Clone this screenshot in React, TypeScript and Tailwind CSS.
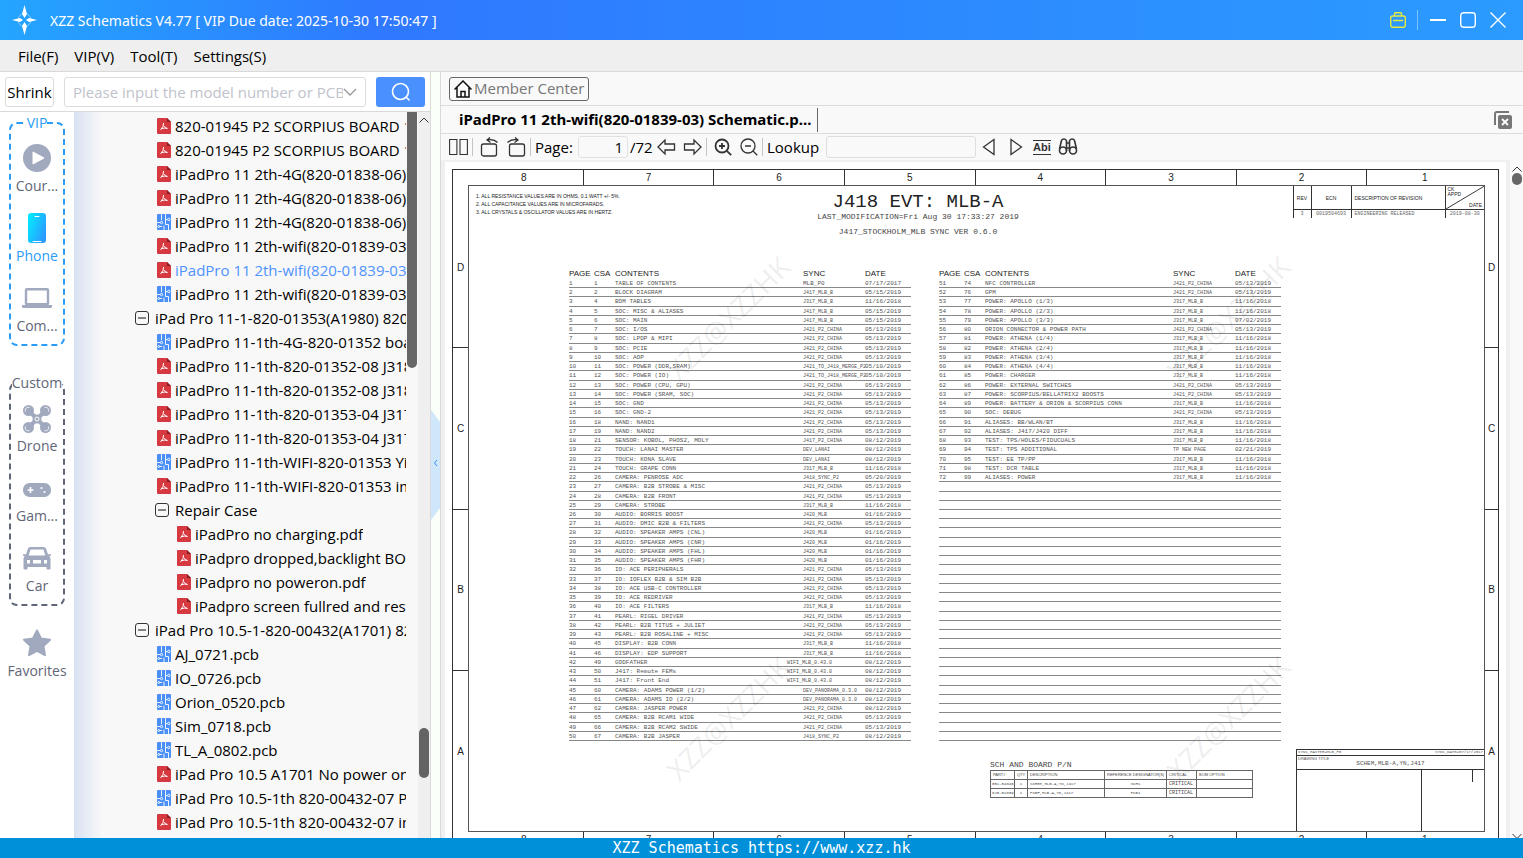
import type { ReactNode } from "react";

type NodeKind = "pdf" | "pcb" | "folder" | "subfolder" | "subpdf";

const tree: [NodeKind, string][] = [
  ["pdf", "820-01945 P2 SCORPIUS BOARD 1000.pdf"],
  ["pdf", "820-01945 P2 SCORPIUS BOARD 1000 Schematic.pdf"],
  ["pdf", "iPadPro 11 2th-4G(820-01838-06) Boardview.pdf"],
  ["pdf", "iPadPro 11 2th-4G(820-01838-06) Schematic.pdf"],
  ["pcb", "iPadPro 11 2th-4G(820-01838-06).pcb"],
  ["pdf", "iPadPro 11 2th-wifi(820-01839-03) Boardview.pdf"],
  ["pdf", "iPadPro 11 2th-wifi(820-01839-03) Schematic.pdf"],
  ["pcb", "iPadPro 11 2th-wifi(820-01839-03) .pcb"],
  ["folder", "iPad Pro 11-1-820-01353(A1980) 820-01352"],
  ["pcb", "iPadPro 11-1th-4G-820-01352 board.pcb"],
  ["pdf", "iPadPro 11-1th-820-01352-08 J318.pdf"],
  ["pdf", "iPadPro 11-1th-820-01352-08 J318 Schematic.pdf"],
  ["pdf", "iPadPro 11-1th-820-01353-04 J317.pdf"],
  ["pdf", "iPadPro 11-1th-820-01353-04 J317 Schematic.pdf"],
  ["pcb", "iPadPro 11-1th-WIFI-820-01353 YiLi.pcb"],
  ["pdf", "iPadPro 11-1th-WIFI-820-01353 image.pdf"],
  ["subfolder", "Repair Case"],
  ["subpdf", "iPadPro no charging.pdf"],
  ["subpdf", "iPadpro dropped,backlight BOOST.pdf"],
  ["subpdf", "iPadpro no poweron.pdf"],
  ["subpdf", "iPadpro screen fullred and restart.pdf"],
  ["folder", "iPad Pro 10.5-1-820-00432(A1701) 820-00433"],
  ["pcb", "AJ_0721.pcb"],
  ["pcb", "IO_0726.pcb"],
  ["pcb", "Orion_0520.pcb"],
  ["pcb", "Sim_0718.pcb"],
  ["pcb", "TL_A_0802.pcb"],
  ["pdf", "iPad Pro 10.5 A1701 No power on.pdf"],
  ["pcb", "iPad Pro 10.5-1th 820-00432-07 PCB.pcb"],
  ["pdf", "iPad Pro 10.5-1th 820-00432-07 image.pdf"],
];

const SELECTED = 6;

const indent: Record<NodeKind, string> = {
  folder: "pl-[61px] gap-[6px]",
  subfolder: "pl-[81px] gap-[6px]",
  pdf: "pl-[83px] gap-[4px]",
  pcb: "pl-[83px] gap-[4px]",
  subpdf: "pl-[103px] gap-[4px]",
};

// page | csa | contents | sync | date
const contentsA = `1|1|TABLE OF CONTENTS|MLB_P0|07/17/2017
2|2|BLOCK DIAGRAM|J417_MLB_B|05/15/2019
3|4|BOM TABLES|J317_MLB_B|11/16/2018
4|5|SOC: MISC & ALIASES|J417_MLB_B|05/15/2019
5|6|SOC: MAIN|J417_MLB_B|05/15/2019
6|7|SOC: I/OS|J421_P2_CHINA|05/13/2019
7|8|SOC: LPDP & MIPI|J421_P2_CHINA|05/13/2019
8|9|SOC: PCIE|J421_P2_CHINA|05/13/2019
9|10|SOC: AOP|J421_P2_CHINA|05/13/2019
10|11|SOC: POWER (DDR,SRAM)|J421_TO_J418_MERGE_P2|05/10/2019
11|12|SOC: POWER (IO)|J421_TO_J418_MERGE_P2|05/10/2019
12|13|SOC: POWER (CPU, GPU)|J421_P2_CHINA|05/13/2019
13|14|SOC: POWER (SRAM, SOC)|J421_P2_CHINA|05/13/2019
14|15|SOC: GND|J421_P2_CHINA|05/13/2019
15|16|SOC: GND-2|J421_P2_CHINA|05/13/2019
16|18|NAND: NAND1|J421_P2_CHINA|05/13/2019
17|19|NAND: NAND2|J421_P2_CHINA|05/13/2019
18|21|SENSOR: KOBOL, PHOS2, MOLY|J417_P2_CHINA|08/12/2019
19|22|TOUCH: LANAI MASTER|DEV_LANAI|08/12/2019
20|23|TOUCH: KONA SLAVE|DEV_LANAI|08/12/2019
21|24|TOUCH: GRAPE CONN|J317_MLB_B|11/16/2018
22|26|CAMERA: PENROSE ADC|J418_SYNC_P2|05/20/2019
23|27|CAMERA: B2B STROBE & MISC|J421_P2_CHINA|05/13/2019
24|28|CAMERA: B2B FRONT|J421_P2_CHINA|05/13/2019
25|29|CAMERA: STROBE|J317_MLB_B|11/16/2018
26|30|AUDIO: BORRIS BOOST|J420_MLB|01/16/2019
27|31|AUDIO: DMIC B2B & FILTERS|J421_P2_CHINA|05/13/2019
28|32|AUDIO: SPEAKER AMPS (CNL)|J420_MLB|01/16/2019
29|33|AUDIO: SPEAKER AMPS (CNR)|J420_MLB|01/16/2019
30|34|AUDIO: SPEAKER AMPS (FHL)|J420_MLB|01/16/2019
31|35|AUDIO: SPEAKER AMPS (FHR)|J420_MLB|01/16/2019
32|36|IO: ACE PERIPHERALS|J421_P2_CHINA|05/13/2019
33|37|IO: IOFLEX B2B & SIM B2B|J421_P2_CHINA|05/13/2019
34|38|IO: ACE USB-C CONTROLLER|J421_P2_CHINA|05/13/2019
35|39|IO: ACE REDRIVER|J421_P2_CHINA|05/13/2019
36|40|IO: ACE FILTERS|J317_MLB_B|11/16/2018
37|41|PEARL: RIGEL DRIVER|J421_P2_CHINA|05/13/2019
38|42|PEARL: B2B TITUS + JULIET|J421_P2_CHINA|05/13/2019
39|43|PEARL: B2B ROSALINE + MISC|J421_P2_CHINA|05/13/2019
40|45|DISPLAY: B2B CONN|J317_MLB_B|11/16/2018
41|46|DISPLAY: EDP SUPPORT|J317_MLB_B|11/16/2018
42|49|GODFATHER|WIFI_MLB_0.43.0|08/12/2019
43|50|J417: Remote FEMs|WIFI_MLB_0.43.0|08/12/2019
44|51|J417: Front End|WIFI_MLB_0.43.0|08/12/2019
45|60|CAMERA: ADAMS POWER (1/2)|DEV_PANORAMA_0.3.0|08/12/2019
46|61|CAMERA: ADAMS IO (2/2)|DEV_PANORAMA_0.3.0|08/12/2019
47|62|CAMERA: JASPER POWER|J421_P2_CHINA|08/12/2019
48|65|CAMERA: B2B RCAM1 WIDE|J421_P2_CHINA|05/13/2019
49|66|CAMERA: B2B RCAM2 SWIDE|J421_P2_CHINA|05/13/2019
50|67|CAMERA: B2B JASPER|J418_SYNC_P2|08/12/2019`;

const contentsB = `51|74|NFC CONTROLLER|J421_P2_CHINA|05/13/2019
52|76|GPM|J421_P2_CHINA|05/13/2019
53|77|POWER: APOLLO (1/3)|J317_MLB_B|11/16/2018
54|78|POWER: APOLLO (2/3)|J317_MLB_B|11/16/2018
55|79|POWER: APOLLO (3/3)|J317_MLB_B|07/02/2019
56|80|ORION CONNECTOR & POWER PATH|J421_P2_CHINA|05/13/2019
57|81|POWER: ATHENA (1/4)|J317_MLB_B|11/16/2018
58|82|POWER: ATHENA (2/4)|J317_MLB_B|11/16/2018
59|83|POWER: ATHENA (3/4)|J317_MLB_B|11/16/2018
60|84|POWER: ATHENA (4/4)|J317_MLB_B|11/16/2018
61|85|POWER: CHARGER|J317_MLB_B|11/16/2018
62|86|POWER: EXTERNAL SWITCHES|J421_P2_CHINA|05/13/2019
63|87|POWER: SCORPIUS/BELLATRIX2 BOOSTS|J421_P2_CHINA|05/13/2019
64|89|POWER: BATTERY & ORION & SCORPIUS CONN|J317_MLB_B|11/16/2018
65|90|SOC: DEBUG|J421_P2_CHINA|05/13/2019
66|91|ALIASES: BB/WLAN/BT|J317_MLB_B|11/16/2018
67|92|ALIASES: J417/J420 DIFF|J317_MLB_B|11/16/2018
68|93|TEST: TPS/HOLES/FIDUCUALS|J317_MLB_B|11/16/2018
69|94|TEST: TPS ADDITIONAL|TP NEW PAGE|02/21/2019
70|95|TEST: EE TP/PP|J317_MLB_B|11/16/2018
71|98|TEST: DCR TABLE|J317_MLB_B|11/16/2018
72|99|ALIASES: POWER|J317_MLB_B|11/16/2018`;

const ROWS = 50;

function toRows(source: string) {
  const rows = source.split("\n").map((line) => line.split("|"));
  while (rows.length < ROWS) rows.push(["", "", "", "", ""]);
  return rows;
}

function PdfIcon() {
  return (
    <svg className="shrink-0" width="14" height="16" viewBox="0 0 14 16">
      <path d="M1 0h9l4 4v11a1 1 0 0 1-1 1H1a1 1 0 0 1-1-1V1a1 1 0 0 1 1-1z" fill="#d63a40" />
      <path d="M10 0l4 4h-4z" fill="#8d1d22" />
      <path d="M6.500 5q.6 3-3 7M6.900 8q1 2 3.500 2.500M5 10.600q2.500-1 5.400-.2" fill="none" stroke="#fff" strokeWidth="1" />
    </svg>
  );
}

function PcbIcon() {
  return (
    <svg className="shrink-0" width="14" height="16" viewBox="0 0 14 16">
      <rect width="14" height="16" rx="1" fill="#4a8ff8" />
      <g fill="none" stroke="#fff" strokeWidth="0.900">
        <path d="M4.500 0v6M8.500 0v10.500h3V16M0 8.500h3M7 16v-4.500M5 12.500H2.500M8.500 5.500h2" />
        <circle cx="11.800" cy="5.500" r="1.200" />
        <circle cx="4.500" cy="8.500" r="1.200" />
        <circle cx="1.700" cy="12.500" r="1" />
      </g>
    </svg>
  );
}

function MinusBox() {
  return (
    <svg className="shrink-0" width="14" height="14" viewBox="0 0 14 14" fill="none" stroke="#333">
      <rect x="0.500" y="0.500" width="13" height="13" rx="2.500" />
      <path d="M3 7h8" strokeWidth="1.200" />
    </svg>
  );
}

function TreeRow({ kind, label, selected }: { kind: NodeKind; label: string; selected: boolean }) {
  const isFolder = kind === "folder" || kind === "subfolder";
  return (
    <li className={`flex h-6 items-center ${indent[kind]} ${selected ? "text-[#4f93ff]" : "text-black"}`}>
      {isFolder ? <MinusBox /> : kind === "pcb" ? <PcbIcon /> : <PdfIcon />}
      <span className="overflow-hidden whitespace-nowrap">{label}</span>
    </li>
  );
}

function SideItem({ label, active, children }: { label: string; active?: boolean; children: ReactNode }) {
  return (
    <button className={`flex w-full flex-col items-center ${active ? "text-[#2b9cf5]" : "text-[#5f6678]"}`}>
      <span className="flex h-9 items-center justify-center text-[#a0a9be]">{children}</span>
      <span className="h-5 text-[14px] leading-5">{label}</span>
    </button>
  );
}

function Sidebar() {
  return (
    <nav className="flex w-[74px] shrink-0 flex-col items-center bg-white pt-[2px]">
      <fieldset className="w-14 rounded-lg border-2 border-dashed border-[#2b9cf5] pb-2">
        <legend className="mx-auto text-[14px] leading-[18px] text-[#2b9cf5]">VIP</legend>
        <div className="flex flex-col gap-[14px] pt-2">
          <SideItem label="Cour...">
            <svg width="28" height="28" viewBox="0 0 28 28">
              <circle cx="14" cy="14" r="14" fill="currentColor" />
              <path d="M10 8l11 6-11 6z" fill="#fff" stroke="#fff" strokeLinejoin="round" />
            </svg>
          </SideItem>
          <SideItem label="Phone" active>
            <svg width="18" height="30" viewBox="0 0 18 30">
              <defs>
                <linearGradient id="phone" x1="0" y1="0" x2="1" y2="0.600">
                  <stop offset="0" stopColor="#00f0ff" />
                  <stop offset="1" stopColor="#2b9cff" />
                </linearGradient>
              </defs>
              <rect width="18" height="30" rx="3" fill="url(#phone)" />
              <path d="M7 3.500h4M5 28.500h8" stroke="#fff" strokeLinecap="round" />
            </svg>
          </SideItem>
          <SideItem label="Com...">
            <svg width="30" height="20" viewBox="0 0 30 20">
              <rect x="4" y="1.200" width="22" height="15" rx="1" fill="none" stroke="currentColor" strokeWidth="2.400" />
              <path d="M0 17h30v1.500a1.500 1.500 0 0 1-1.500 1.500h-27A1.500 1.500 0 0 1 0 18.500z" fill="currentColor" />
            </svg>
          </SideItem>
        </div>
      </fieldset>

      <fieldset className="mt-7 w-14 rounded-lg border-2 border-dashed border-[#5f6678] pb-2">
        <legend className="mx-auto text-[14px] leading-[18px] text-[#5f6678]">Custom</legend>
        <div className="flex flex-col gap-[14px] pt-2">
          <SideItem label="Drone">
            <svg width="28" height="30" viewBox="0 -2 28 30" fill="currentColor">
              <path d="M6 6l16 16M22 6L6 22" stroke="currentColor" strokeWidth="4" />
              <circle cx="5.500" cy="5.500" r="5.500" />
              <circle cx="22.500" cy="5.500" r="5.500" />
              <circle cx="5.500" cy="22.500" r="5.500" />
              <circle cx="22.500" cy="22.500" r="5.500" />
              <circle cx="14" cy="14" r="4.500" />
              <circle cx="14" cy="14" r="2" fill="none" stroke="#fff" />
              <path d="M2.500 6.500a3 3 0 0 1 4-4M21.500 2.500a3 3 0 0 1 4 4M2.500 21.500a3 3 0 0 0 4 4M21.500 25.500a3 3 0 0 0 4-4" fill="none" stroke="#fff" strokeWidth="0.800" />
            </svg>
          </SideItem>
          <SideItem label="Gam...">
            <svg width="28" height="18" viewBox="0 -4 28 18">
              <rect width="28" height="14" rx="6.500" fill="currentColor" />
              <path d="M4.500 7h6M7.500 4v6" stroke="#fff" strokeWidth="1.600" />
              <circle cx="18.500" cy="5" r="1.100" fill="#fff" />
              <circle cx="21.500" cy="9" r="1.100" fill="#fff" />
            </svg>
          </SideItem>
          <SideItem label="Car">
            <svg width="28" height="23" viewBox="0 0 28 23" fill="currentColor">
              <path fillRule="evenodd" d="M7.500 0h13q2 0 2.700 2l1.800 5.500 2.500-.5q.5 0 .5.700v.8l-1.600.7q1.100 1 1.100 2.800v9.500q0 1-1 1h-2q-1 0-1-1v-1.500h-19V21.500q0 1-1 1h-2q-1 0-1-1V12q0-1.800 1.100-2.800L0 8.500v-.8q0-.7.500-.7L3 7.500 4.800 2Q5.500 0 7.500 0zM7.500 2.500L5.700 8.500h16.600l-1.800-6zM4 13v3.500h3V13zM10 13v3.500h8V13zM21 13v3.500h3V13z" />
            </svg>
          </SideItem>
        </div>
      </fieldset>

      <div className="mt-[19px] w-full">
        <SideItem label="Favorites">
          <svg width="30" height="28" viewBox="0 0 30 28">
            <path d="M15 1.500l4 8 9 1.300-6.500 6.300 1.500 9-8-4.200-8 4.200 1.500-9L2 10.800l9-1.300z" fill="currentColor" stroke="currentColor" strokeWidth="2" strokeLinejoin="round" />
          </svg>
        </SideItem>
      </div>
    </nav>
  );
}

function TitleBar() {
  return (
    <header className="flex h-10 shrink-0 items-center bg-linear-to-r from-[#24a5ff] via-[#2f78ff] via-25% to-[#2b9bff] pr-[17px] pl-3 text-white">
      <svg width="25" height="30" viewBox="0 0 25 30">
        <circle cx="12.500" cy="15" r="6.500" fill="none" stroke="#9fd3ff" strokeWidth="0.800" />
        <path d="M12.500 0l2.500 9-2.500 4-2.500-4zM12.500 30l2.500-9-2.500-4-2.500 4zM0 15l8-2 3 2-3 2zM25 15l-8-2-3 2 3 2z" fill="#fff" />
      </svg>
      <h1 className="ml-[13px] pt-px font-['Noto_Sans',sans-serif] text-[14px] leading-5">XZZ Schematics V4.77 [ VIP Due date: 2025-10-30 17:50:47 ]</h1>
      <div className="ml-auto flex items-center">
        <button aria-label="Membership">
          <svg width="16" height="16" viewBox="0 0 16 16" fill="none" stroke="#e6ea3c" strokeWidth="1.400">
            <rect x="0.700" y="4" width="14.600" height="11.300" rx="2" />
            <path d="M4.500 4V1.500q0-.8.800-.8h5.400q.8 0 .8.800V4M3 8.500h10" />
          </svg>
        </button>
        <span className="ml-[11px] h-5 w-px bg-[#7cc0ff]" />
        <button aria-label="Minimize" className="ml-3">
          <svg width="16" height="16" viewBox="0 0 16 16"><path d="M0 8h16" stroke="#fff" strokeWidth="2" /></svg>
        </button>
        <button aria-label="Maximize" className="ml-[14px]">
          <svg width="16" height="16" viewBox="0 0 16 16"><rect x="0.700" y="0.700" width="14.600" height="14.600" rx="3" fill="none" stroke="#fff" strokeWidth="1.400" /></svg>
        </button>
        <button aria-label="Close" className="ml-[14px]">
          <svg width="16" height="16" viewBox="0 0 16 16"><path d="M0.500 0.500l15 15M15.500 0.500l-15 15" stroke="#fff" strokeWidth="1.400" /></svg>
        </button>
      </div>
    </header>
  );
}

function SearchBar() {
  return (
    <div className="flex h-10 shrink-0 items-center border-b border-[#d9d9d9] bg-white px-[5px] pt-px">
      <button className="h-[30px] w-[49px] rounded-[3px] border border-[#dcdcdc] text-[15px] text-black">Shrink</button>
      <label className="ml-[10px] flex h-[30px] min-w-0 flex-1 items-center rounded-[3px] border border-[#dcdcdc] px-2">
        <input
          aria-label="Model number or PCB"
          placeholder="Please input the model number or PCB"
          className="min-w-0 flex-1 text-[15px] outline-none placeholder:text-[#bfc3cb]"
        />
        <svg className="shrink-0" width="14" height="8" viewBox="0 0 14 8"><path d="M1 1l6 6 6-6" fill="none" stroke="#999" strokeWidth="1.400" /></svg>
      </label>
      <button aria-label="Search" className="ml-[10px] flex h-[30px] w-[49px] items-center justify-center rounded-[3px] bg-[#4a90ff]">
        <svg width="20" height="20" viewBox="0 0 20 20" fill="none" stroke="#fff" strokeWidth="1.600">
          <circle cx="9.500" cy="9.500" r="8" />
          <path d="M15 15l3 3" strokeLinecap="round" />
        </svg>
      </button>
    </div>
  );
}

function LeftPanel() {
  return (
    <aside className="flex w-[431px] shrink-0 flex-col border-r border-[#d9d9d9]">
      <SearchBar />
      <div className="flex min-h-0 flex-1">
        <Sidebar />
        <div className="flex min-w-0 flex-1 bg-[#f8f8f8] bg-linear-to-r from-[#d9e2f2] to-[#f8f8f8] to-[28px]">
          <ul className="min-w-0 flex-1 overflow-hidden pt-[2px] text-[15px] leading-6">
            {tree.map(([kind, label], i) => (
              <TreeRow key={i} kind={kind} label={label} selected={i === SELECTED} />
            ))}
          </ul>
          <div className="ml-px w-[11px] shrink-0">
            <div className="h-64 w-[10px] rounded-b-full bg-[#666]" />
          </div>
          <div className="flex w-3 shrink-0 flex-col items-center bg-[#efefef] pt-[5px]">
            <svg width="10" height="6" viewBox="0 0 10 6"><path d="M0.500 5.500L5 1l4.500 4.500" fill="none" stroke="#333" /></svg>
            <div className="mt-auto mb-[60px] h-[50px] w-[10px] rounded-full bg-[#636363]" />
          </div>
        </div>
      </div>
    </aside>
  );
}

function Splitter() {
  return (
    <div className="flex w-[9px] shrink-0 flex-col bg-[#fafff9]">
      <button aria-label="Collapse panel" className="mt-[338px]">
        <svg width="9" height="110" viewBox="0 0 9 110">
          <path d="M0 0l9 12v86L0 110z" fill="#cfe6fb" />
          <path d="M6 50L3.500 53 6 56" fill="none" stroke="#3c8ff0" />
        </svg>
      </button>
    </div>
  );
}

function ToolIcon({ label, className, width, children }: { label: string; className?: string; width: number; children: ReactNode }) {
  return (
    <button aria-label={label} className={className}>
      <svg width={width} height="20" viewBox={`0 0 ${width} 20`} fill="none" stroke="#333" strokeWidth="1.300">
        {children}
      </svg>
    </button>
  );
}

function Divider() {
  return <span className="mx-1 h-[18px] w-px bg-[#c4c4c4]" />;
}

function ToolBar() {
  return (
    <div className="flex h-[26px] shrink-0 items-center bg-[#f9f9f9] pl-2 text-[15px] text-black">
      <ToolIcon label="Two pages" width={19}>
        <path d="M0.600 2.500h7.300v15H0.600zM11 2.500h7.400v15H11z" strokeWidth="1.100" />
      </ToolIcon>
      <Divider />
      <ToolIcon label="Rotate left" width={20} className="ml-[3px]">
        <rect x="1.500" y="7" width="15" height="12" rx="2" />
        <path d="M17.500 5.500Q13.500 1.500 7 3M10 0.500L7 3l3.500 2.500" />
      </ToolIcon>
      <ToolIcon label="Rotate right" width={20} className="ml-[6px]">
        <rect x="3.500" y="7" width="15" height="12" rx="2" />
        <path d="M1.500 5.500Q5.500 1.500 12 3M9 0.500L12 3 8.500 5.500" />
      </ToolIcon>
      <Divider />
      <label htmlFor="page" className="w-[38px]">Page:</label>
      <input id="page" defaultValue="1" className="ml-[5px] h-[22px] w-[50px] rounded-[3px] border border-[#e2e2e2] pr-1 text-right outline-none" />
      <span className="ml-[2px] w-6">/72</span>
      <ToolIcon label="Previous page" width={19} className="ml-[3px]">
        <path d="M1 10l7-7v4h9.500v6H8v4z" />
      </ToolIcon>
      <ToolIcon label="Next page" width={19} className="ml-[7px]">
        <path d="M18 10l-7-7v4H1.500v6H11v4z" />
      </ToolIcon>
      <Divider />
      <ToolIcon label="Zoom in" width={18} className="ml-[3px]">
        <circle cx="8" cy="9" r="6.500" strokeWidth="1.800" />
        <path d="M5 9h6M8 6v6M12.800 13.800l4.400 4.400" strokeWidth="1.800" />
      </ToolIcon>
      <ToolIcon label="Zoom out" width={18} className="ml-2">
        <circle cx="8" cy="9" r="7" />
        <path d="M5 9h6M13 14l4.300 4.300" />
      </ToolIcon>
      <Divider />
      <label htmlFor="lookup" className="w-[53px]">Lookup</label>
      <input id="lookup" className="ml-[6px] h-[22px] w-[150px] rounded-[3px] border border-[#dedede] outline-none" />
      <ToolIcon label="Find previous" width={14} className="ml-[6px]">
        <path d="M1.500 10L12 2.500v15z" />
      </ToolIcon>
      <ToolIcon label="Find next" width={14} className="ml-[13px]">
        <path d="M12.500 10L2 2.500v15z" />
      </ToolIcon>
      <button className="ml-[10px] border-y border-[#333] font-['Liberation_Sans',sans-serif] text-[11px] leading-[13px] font-bold text-[#333]">Abi</button>
      <ToolIcon label="Find all" width={20} className="ml-[7px]">
        <path d="M1.500 12L3.500 3.500q.5-1.500 2.500-1.500 2 0 2.500 2V14M18.500 12L16.500 3.500Q16 2 14 2q-2 0-2.500 2v10M8.500 6h3M8.500 11h3" strokeWidth="1.600" />
        <circle cx="5" cy="13.500" r="3.500" strokeWidth="1.600" />
        <circle cx="15" cy="13.500" r="3.500" strokeWidth="1.600" />
      </ToolIcon>
    </div>
  );
}

const columnPad = ["pl-3", "", "", "", "", "", "", "pr-4"];

function ColumnRuler({ bottom }: { bottom?: boolean }) {
  return (
    <div className={`grid h-4 shrink-0 grid-cols-8 divide-x divide-[#333] border-[#333] text-center text-[10px] leading-4 ${bottom ? "border-t-0" : "border-t"}`}>
      {[8, 7, 6, 5, 4, 3, 2, 1].map((n, i) => (
        <span key={n} className={columnPad[i]}>{n}</span>
      ))}
    </div>
  );
}

function RowRuler({ className }: { className: string }) {
  return (
    <div className={`grid shrink-0 grid-rows-4 divide-y divide-[#333] pt-[2px] text-center text-[10px] ${className}`}>
      {["D", "C", "B", "A"].map((letter) => (
        <span key={letter} className="flex items-center justify-center">{letter}</span>
      ))}
    </div>
  );
}

function ContentsTable({ source }: { source: string }) {
  return (
    <table className="block w-[342px] text-left font-['Liberation_Mono',monospace] text-[6px] leading-[9px] text-[#555]">
      <thead className="block">
        <tr className="grid grid-cols-[25px_21px_188px_62px_46px] font-['Liberation_Sans',sans-serif] text-[8px] leading-[10px] text-[#222]">
          {["PAGE", "CSA", "CONTENTS", "SYNC", "DATE"].map((head) => (
            <th key={head} className="font-normal">{head}</th>
          ))}
        </tr>
      </thead>
      <tbody className="grid h-[462px] grid-rows-[repeat(50,minmax(0,1fr))]">
        {toRows(source).map(([page, csa, contents, sync, date], i) => (
          <tr key={i} className="grid grid-cols-[25px_21px_188px_62px_46px] border-b border-[#888] whitespace-nowrap">
            <td>{page}</td>
            <td>{csa}</td>
            <td>{contents}</td>
            <td className={sync === "MLB_P0" ? "" : sync.startsWith("WIFI") ? "-ml-4 text-[5px] leading-[10px]" : "text-[5px] leading-[10px]"}>{sync}</td>
            <td>{date}</td>
          </tr>
        ))}
      </tbody>
    </table>
  );
}

function RevisionTable() {
  return (
    <table className="ml-auto h-[31px] w-[191px] table-fixed border-collapse text-[5px] leading-[6px]">
      <colgroup>
        <col className="w-[18px]" />
        <col className="w-[40px]" />
        <col className="w-[94px]" />
        <col className="w-[39px]" />
      </colgroup>
      <thead>
        <tr className="h-[23px] border-b border-[#333]">
          <th className="border-l border-[#333] font-normal">REV</th>
          <th className="border-l border-[#333] font-normal">ECN</th>
          <th className="border-l border-[#333] pl-[3px] text-left font-normal">DESCRIPTION OF REVISION</th>
          <th className="relative border-l border-[#333] font-normal">
            <svg className="absolute inset-0 size-full" viewBox="0 0 39 24" preserveAspectRatio="none">
              <path d="M0 24L39 0" stroke="#333" />
            </svg>
            <div className="flex h-[23px] flex-col justify-between px-[2px] py-[1px]">
              <span className="text-left leading-[5px]">CK<br />APPD</span>
              <span className="text-right">DATE</span>
            </div>
          </th>
        </tr>
      </thead>
      <tbody>
        <tr className="h-2 text-center font-['Liberation_Mono',monospace] text-[#666]">
          <td className="border-l border-[#333]">3</td>
          <td className="border-l border-[#333]">0019504693</td>
          <td className="border-l border-[#333] pl-[3px] text-left">ENGINEERING RELEASED</td>
          <td className="border-l border-[#333]">2019-08-30</td>
        </tr>
      </tbody>
    </table>
  );
}

function PartsTable() {
  return (
    <div className="ml-[521px] w-[262px]">
      <h3 className="font-['Liberation_Mono',monospace] text-[8px] leading-[10px] text-[#444]">SCH AND BOARD P/N</h3>
      <table className="w-full table-fixed border-collapse border border-[#666] text-left text-[4px] leading-[8px] text-[#444]">
        <colgroup>
          <col className="w-[24px]" />
          <col className="w-[13px]" />
          <col className="w-[77px]" />
          <col className="w-[62px]" />
          <col className="w-[30px]" />
          <col className="w-[56px]" />
        </colgroup>
        <thead>
          <tr className="divide-x divide-[#666] border-b border-[#666]">
            {["PART#", "QTY", "DESCRIPTION", "REFERENCE DESIGNATOR(S)", "CRITICAL", "BOM OPTION"].map((head) => (
              <th key={head} className="pl-[2px] font-normal whitespace-nowrap">{head}</th>
            ))}
          </tr>
        </thead>
        <tbody className="font-['Liberation_Mono',monospace] whitespace-nowrap">
          {[
            ["051-04846", "1", "SCHEM,MLB-A,YN,J417", "SCH1"],
            ["820-01839", "1", "PCBF,MLB-A,YN,J417", "PCB1"],
          ].map(([part, qty, description, reference]) => (
            <tr key={part} className="divide-x divide-[#666] border-b border-[#666]">
              <td className="pl-px">{part}</td>
              <td className="text-center">{qty}</td>
              <td className="pl-[2px]">{description}</td>
              <td className="text-center">{reference}</td>
              <td className="pl-[2px] text-[5px]">CRITICAL</td>
              <td />
            </tr>
          ))}
        </tbody>
      </table>
    </div>
  );
}

function TitleBlock() {
  return (
    <div className="mt-auto ml-auto flex h-[82px] w-[188px] flex-col border-t border-l border-[#333] text-[4px] leading-[5px] text-[#555]">
      <div className="flex h-[6px] justify-between border-b border-[#333] px-px font-['Liberation_Mono',monospace]">
        <span>SYNC_MASTER=MLB_P0</span>
        <span>SYNC_DATE=07/17/2017</span>
      </div>
      <div className="h-[14px] border-b border-[#333] px-px">
        <p>DRAWING TITLE</p>
        <p className="text-center font-['Liberation_Mono',monospace] text-[6px] leading-[6px]">SCHEM,MLB-A,YN,J417</p>
      </div>
      <div className="flex flex-1">
        <div className="w-[125px] border-r border-[#333]" />
        <div className="h-3 w-[51px] border-r border-[#333]" />
      </div>
    </div>
  );
}

// stamped over the sheet, one per quadrant
const watermarks = [
  "left-[195px] top-[140px]",
  "left-[695px] top-[140px]",
  "left-[195px] top-[540px]",
  "left-[695px] top-[540px]",
];

function Sheet() {
  return (
    <article className="relative mt-[2px] ml-1 min-w-0 flex-1 overflow-hidden bg-white px-[7px] pt-[7px] font-['Liberation_Sans',sans-serif] text-[#222]">
      <div className="flex flex-col border-x border-[#333]">
        <ColumnRuler />
        <div className="flex h-[647px]">
          <RowRuler className="w-[15px]" />
          <div className="flex min-w-0 flex-1 flex-col border border-[#555]">
            <div className="flex h-[83px]">
              <ol className="w-[344px] pt-[6px] pl-[7px] text-[5px] leading-[8px]">
                <li>1. ALL RESISTANCE VALUES ARE IN OHMS, 0.1 WATT +/- 5%.</li>
                <li>2. ALL CAPACITANCE VALUES ARE IN MICROFARADS.</li>
                <li>3. ALL CRYSTALS &amp; OSCILLATOR VALUES ARE IN HERTZ.</li>
              </ol>
              <div className="w-[210px] text-center font-['Liberation_Mono',monospace] text-[8px] leading-[10px] whitespace-nowrap text-[#444]">
                <h2 className="pt-[6px] text-[19px] leading-5 text-[#222]">J418 EVT: MLB-A</h2>
                <p>LAST_MODIFICATION=Fri Aug 30 17:33:27 2019</p>
                <p className="mt-[5px]">J417_STOCKHOLM_MLB SYNC VER 0.6.0</p>
              </div>
              <RevisionTable />
            </div>
            <div className="flex gap-7 pl-[100px]">
              <ContentsTable source={contentsA} />
              <ContentsTable source={contentsB} />
            </div>
            <div className="flex flex-1">
              <div className="pt-[19px]">
                <PartsTable />
              </div>
              <TitleBlock />
            </div>
          </div>
          <RowRuler className="w-[13px]" />
        </div>
        <ColumnRuler bottom />
      </div>
      {watermarks.map((place) => (
        <span key={place} aria-hidden="true" className={`absolute w-44 -rotate-45 text-center font-['Noto_Sans',sans-serif] text-[28px] leading-8 text-black/8 ${place}`}>
          XZZ@XZZHK
        </span>
      ))}
    </article>
  );
}

function Viewer() {
  return (
    <main className="flex min-w-0 flex-1 flex-col border-l border-[#d9d9d9] bg-[#f9f9f9]">
      <div className="flex h-[34px] shrink-0 items-center border-b border-[#dcdcdc] pl-2">
        <button className="flex h-6 items-center gap-[2px] rounded-[3px] border border-[#666] px-1 text-[15px] text-[#777]">
          <svg width="18" height="18" viewBox="0 0 18 18" fill="none" stroke="#111" strokeWidth="1.500">
            <path d="M0.500 9.500L9 1l8.500 8.500M3 7.500v9.500h12V7.500M7 17v-5.500h4V17" />
          </svg>
          Member Center
        </button>
      </div>
      <div className="flex h-7 shrink-0 items-center border-b border-[#dcdcdc] pr-[11px]">
        <button className="h-6 border-r border-[#666] pr-[6px] pl-[18px] font-['Noto_Sans',sans-serif] text-[15px] font-bold whitespace-nowrap text-black">
          iPadPro 11 2th-wifi(820-01839-03) Schematic.p...
        </button>
        <button aria-label="Close all tabs" className="ml-auto">
          <svg width="18" height="18" viewBox="0 0 18 18">
            <path d="M1 14V3q0-2 2-2h12" fill="none" stroke="#777" strokeWidth="2" />
            <rect x="4" y="4" width="14" height="14" rx="2" fill="#777" />
            <path d="M8 8l6 6M14 8l-6 6" stroke="#fff" strokeWidth="1.800" />
          </svg>
        </button>
      </div>
      <ToolBar />
      <div className="flex min-h-0 flex-1 bg-[#f0f0f0]">
        <Sheet />
        <div className="ml-1 flex w-[13px] shrink-0 flex-col items-center bg-[#f9f9f9] pt-[6px]">
          <svg width="10" height="6" viewBox="0 0 10 6"><path d="M0.500 5.500L5 1l4.500 4.500" fill="none" stroke="#333" /></svg>
          <div className="mt-px h-3 w-[10px] rounded-full bg-[#666]" />
          <svg className="mt-auto" width="10" height="4" viewBox="0 0 10 4"><path d="M0.500 0L5 4.500 9.500 0" fill="none" stroke="#333" /></svg>
        </div>
      </div>
    </main>
  );
}

export default function App() {
  return (
    <div className="flex h-screen flex-col overflow-hidden bg-white font-['Open_Sans',sans-serif]">
      <TitleBar />
      <nav className="flex h-8 shrink-0 items-center gap-4 border-b border-[#d9d9d9] bg-[#efefef] pt-px pl-[18px] text-[15px] text-black">
        <button>File(F)</button>
        <button>VIP(V)</button>
        <button>Tool(T)</button>
        <button>Settings(S)</button>
      </nav>
      <div className="flex min-h-0 flex-1">
        <LeftPanel />
        <Splitter />
        <Viewer />
      </div>
      <footer className="flex h-5 shrink-0 items-center justify-center bg-[#0090d9] pt-px font-['DejaVu_Sans_Mono',monospace] text-[15px] text-white">
        XZZ Schematics https://www.xzz.hk
      </footer>
    </div>
  );
}
